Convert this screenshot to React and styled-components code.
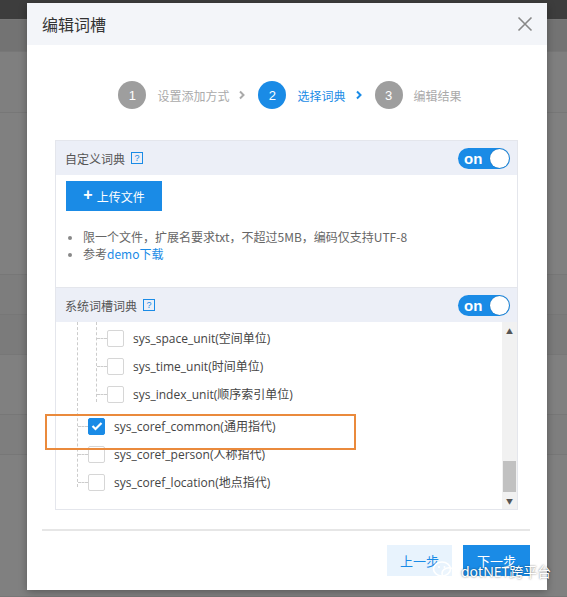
import React from 'react'
import styled, { createGlobalStyle } from 'styled-components'

const GlobalStyle = createGlobalStyle`
  html, body { margin: 0; padding: 0; }
  body {
    font-family: "Noto Sans", "Noto Sans CJK SC", sans-serif;
    background: #7f7f7f;
    overflow: hidden;
  }
`

const steps = [
  { n: 1, label: '设置添加方式' },
  { n: 2, label: '选择词典', active: true },
  { n: 3, label: '编辑结果' },
]

const units = ['sys_space_unit(空间单位)', 'sys_time_unit(时间单位)', 'sys_index_unit(顺序索引单位)']
const corefs = [
  { label: 'sys_coref_common(通用指代)', checked: true },
  { label: 'sys_coref_person(人称指代)' },
  { label: 'sys_coref_location(地点指代)' },
]

const bands = [
  { h: 20, bg: '#3d3d3d' },
  { h: 32, bg: '#737373' },
  { h: 61, bg: '#7f7f7f' },
  { h: 162, bg: '#808080' },
  { h: 40, bg: '#7d7d7d' },
  { h: 40, bg: '#7b7b7b' },
  { h: 60, bg: '#808080' },
  { h: 40, bg: '#7e7e7e' },
  { h: 142, bg: '#808080' },
]

const Chevron = ({ color }) => (
  <svg width="8" height="10" viewBox="0 0 8 10">
    <path d="M2 1.5 L5.5 5 L2 8.5" fill="none" stroke={color} strokeWidth="2" />
  </svg>
)

const Toggle = () => (
  <Switch>
    <span>on</span>
    <Knob />
  </Switch>
)

const Check = ({ checked }) => (
  <Box $checked={checked}>
    {checked && (
      <svg width="12" height="10" viewBox="0 0 12 10">
        <path d="M1.5 5 L4.5 8 L10.5 2" fill="none" stroke="#fff" strokeWidth="2.2" />
      </svg>
    )}
  </Box>
)

const App = () => {
  return (
    <Page>
      <GlobalStyle />
      {bands.map((b, i) => (
        <Band key={i} $h={b.h} $bg={b.bg} />
      ))}

      <Modal>
        <Header>
          <Title>编辑词槽</Title>
          <Close>
            <svg width="16" height="16" viewBox="0 0 16 16">
              <path d="M1.5 1.5 L14.5 14.5 M14.5 1.5 L1.5 14.5" stroke="#888" strokeWidth="1.6" />
            </svg>
          </Close>
        </Header>

        <Steps>
          {steps.map((s, i) => (
            <React.Fragment key={s.n}>
              <Step>
                <Circle $active={s.active}>{s.n}</Circle>
                <StepLabel $active={s.active}>{s.label}</StepLabel>
              </Step>
              {i < steps.length - 1 && (
                <Arrow>
                  <Chevron color={s.active ? '#1a8be6' : '#aaa'} />
                </Arrow>
              )}
            </React.Fragment>
          ))}
        </Steps>

        <Panel>
          <PanelHead>
            <HeadTitle>
              自定义词典 <Help>?</Help>
            </HeadTitle>
            <Toggle />
          </PanelHead>
          <UploadBody>
            <UploadButton>
              <Plus>+</Plus> 上传文件
            </UploadButton>
            <Notes>
              <li>限一个文件，扩展名要求txt，不超过5MB，编码仅支持UTF-8</li>
              <li>
                参考<Link>demo下载</Link>
              </li>
            </Notes>
          </UploadBody>

          <PanelHead>
            <HeadTitle>
              系统词槽词典 <Help>?</Help>
            </HeadTitle>
            <Toggle />
          </PanelHead>
          <TreeBody>
            <Tree>
              <SubTree>
                {units.map((u) => (
                  <Node key={u}>
                    <Dash />
                    <Check />
                    <NodeText>{u}</NodeText>
                  </Node>
                ))}
              </SubTree>
              {corefs.map((c) => (
                <Node key={c.label} $outer>
                  <Dash />
                  <Check checked={c.checked} />
                  <NodeText>{c.label}</NodeText>
                </Node>
              ))}
            </Tree>
            <Scrollbar>
              <ScrollArrow>▲</ScrollArrow>
              <Track>
                <Thumb />
              </Track>
              <ScrollArrow>▼</ScrollArrow>
            </Scrollbar>
          </TreeBody>
        </Panel>

        <Footer>
          <Button>上一步</Button>
          <Button $primary>下一步</Button>
        </Footer>
      </Modal>

      <Highlight />
      <Watermark>
        <svg width="26" height="22" viewBox="0 0 26 22">
          <ellipse cx="10" cy="9" rx="8.5" ry="7" fill="none" stroke="#fff" strokeWidth="1.6" />
          <ellipse cx="17" cy="13.5" rx="7" ry="5.8" fill="rgba(255,255,255,0.2)" stroke="#fff" strokeWidth="1.6" />
          <circle cx="7" cy="7" r="1" fill="#fff" />
          <circle cx="12.5" cy="7" r="1" fill="#fff" />
        </svg>
        <span>dotNET跨平台</span>
      </Watermark>
    </Page>
  )
}

export default App

const Page = styled.div`
  position: relative;
  width: 567px;
  height: 597px;
  display: flex;
  flex-direction: column;
  overflow: hidden;
`

const Band = styled.div`
  height: ${(p) => p.$h}px;
  flex-shrink: 0;
  background: ${(p) => p.$bg};
  border-bottom: 1px solid #777;
  box-sizing: border-box;
`

const Modal = styled.div`
  position: absolute;
  left: 27px;
  top: 3px;
  width: 520px;
  height: 587px;
  background: #fff;
  box-shadow: 0 2px 8px rgba(0, 0, 0, 0.3);
  display: flex;
  flex-direction: column;
`

const Header = styled.div`
  height: 42px;
  background: #f3f5f9;
  display: flex;
  align-items: center;
  justify-content: space-between;
  padding: 0 14px 0 15px;
`

const Title = styled.div`
  font-size: 16px;
  color: #333;
  font-family: "Noto Sans CJK SC", sans-serif;
`

const Close = styled.div`
  display: flex;
  align-items: center;
`

const Steps = styled.div`
  height: 95px;
  display: flex;
  align-items: center;
  justify-content: center;
  padding-left: 6px;
  padding-top: 5px;
  box-sizing: border-box;
`

const Step = styled.div`
  display: flex;
  align-items: center;
  gap: 11px;
`

const Circle = styled.div`
  width: 28px;
  height: 28px;
  border-radius: 50%;
  background: ${(p) => (p.$active ? '#1a8be6' : '#9e9e9e')};
  color: #fff;
  font-size: 13px;
  display: flex;
  align-items: center;
  justify-content: center;
  font-family: "Liberation Sans", sans-serif;
`

const StepLabel = styled.span`
  font-size: 12px;
  color: ${(p) => (p.$active ? '#1a8be6' : '#aaa')};
  font-family: "Noto Sans CJK SC", sans-serif;
`

const Arrow = styled.div`
  display: flex;
  align-items: center;
  margin: 0 12px 0 9px;
`

const Panel = styled.div`
  margin: 0 29px 0 28px;
  border: 1px solid #e4e6ec;
  display: flex;
  flex-direction: column;
`

const PanelHead = styled.div`
  height: 34px;
  background: #eceff7;
  display: flex;
  align-items: center;
  justify-content: space-between;
  padding: 0 7px 0 9px;
`

const HeadTitle = styled.div`
  font-size: 12px;
  color: #555;
  display: flex;
  align-items: center;
  gap: 6px;
  font-family: "Noto Sans CJK SC", sans-serif;
`

const Help = styled.span`
  width: 10px;
  height: 10px;
  border: 1px solid #1a8be6;
  color: #1a8be6;
  font-size: 9px;
  line-height: 10px;
  text-align: center;
  font-family: "Liberation Sans", sans-serif;
`

const Switch = styled.div`
  width: 52px;
  height: 21px;
  border-radius: 11px;
  background: #1a8be6;
  display: flex;
  align-items: center;
  justify-content: space-between;
  box-sizing: border-box;
  padding: 0 1px 0 6px;
  color: #fff;
  font-size: 15px;
  font-weight: bold;
  font-family: "Liberation Sans", sans-serif;
`

const Knob = styled.div`
  width: 19px;
  height: 19px;
  border-radius: 50%;
  background: #fff;
  box-shadow: 0 0 1px rgba(0, 0, 0, 0.4);
`

const UploadBody = styled.div`
  height: 113px;
  padding: 6px 10px 0;
  box-sizing: border-box;
  border-bottom: 1px solid #e4e6ec;
`

const UploadButton = styled.div`
  width: 96px;
  height: 30px;
  background: #1a8be6;
  color: #fff;
  font-size: 12px;
  display: flex;
  align-items: center;
  justify-content: center;
  gap: 4px;
  font-family: "Noto Sans CJK SC", sans-serif;
`

const Plus = styled.span`
  font-size: 16px;
  font-weight: bold;
  font-family: "Liberation Sans", sans-serif;
  margin-top: -2px;
`

const Notes = styled.ul`
  margin: 17px 0 0;
  padding-left: 17px;
  font-size: 12px;
  color: #666;
  line-height: 17px;
  font-family: "Noto Sans CJK SC", sans-serif;

  li::marker {
    font-size: 10px;
    color: #888;
  }
`

const Link = styled.span`
  color: #1a8be6;
`

const TreeBody = styled.div`
  height: 187px;
  display: flex;
  justify-content: space-between;
`

const Tree = styled.div`
  position: relative;
  margin-left: 21px;
  border-left: 1px dashed #ccc;
  height: 165px;
  display: flex;
  flex-direction: column;
`

const SubTree = styled.div`
  margin-left: 18px;
  border-left: 1px dashed #ccc;
  height: 72px;
  padding-top: 8px;
  display: flex;
  flex-direction: column;
  gap: 12px;
  margin-bottom: 16px;
`

const Node = styled.div`
  display: flex;
  align-items: center;
  height: 16px;
  margin-bottom: ${(p) => (p.$outer ? '12px' : '0')};
`

const Dash = styled.div`
  width: 10px;
  border-top: 1px dashed #ccc;
`

const Box = styled.div`
  width: 15px;
  height: 15px;
  border: 1px solid ${(p) => (p.$checked ? '#1a8be6' : '#d6d6d6')};
  background: ${(p) => (p.$checked ? '#1a8be6' : '#fff')};
  border-radius: 2px;
  display: flex;
  align-items: center;
  justify-content: center;
`

const NodeText = styled.span`
  margin-left: 9px;
  font-size: 12px;
  color: #444;
  font-family: "Open Sans", "Noto Sans CJK SC", sans-serif;
`

const Scrollbar = styled.div`
  width: 15px;
  display: flex;
  flex-direction: column;
  background: #f1f1f1;
`

const ScrollArrow = styled.div`
  height: 17px;
  font-size: 7px;
  color: #555;
  display: flex;
  align-items: center;
  justify-content: center;
`

const Track = styled.div`
  flex: 1;
  display: flex;
  flex-direction: column;
  justify-content: flex-end;
`

const Thumb = styled.div`
  height: 31px;
  margin: 0 1px;
  background: #c1c1c1;
`

const Footer = styled.div`
  margin: 19px 17px 0 15px;
  border-top: 2px solid #e6e6e6;
  padding-top: 14px;
  display: flex;
  justify-content: flex-end;
  gap: 11px;
`

const Button = styled.div`
  width: ${(p) => (p.$primary ? '67px' : '65px')};
  height: 31px;
  background: ${(p) => (p.$primary ? '#1a8be6' : '#e8f3fd')};
  color: ${(p) => (p.$primary ? '#fff' : '#1a8be6')};
  font-size: 13px;
  display: flex;
  align-items: center;
  justify-content: center;
  font-family: "Noto Sans CJK SC", sans-serif;
`

const Highlight = styled.div`
  position: absolute;
  left: 45px;
  top: 414px;
  width: 307px;
  height: 32px;
  border: 2px solid #ea8a3c;
`

const Watermark = styled.div`
  position: absolute;
  left: 432px;
  top: 560px;
  display: flex;
  align-items: center;
  gap: 3px;
  color: #fff;
  font-size: 14px;
  font-family: "Noto Sans", "Noto Sans CJK SC", sans-serif;
  text-shadow: 0 0 2px rgba(0, 0, 0, 0.6);
`
